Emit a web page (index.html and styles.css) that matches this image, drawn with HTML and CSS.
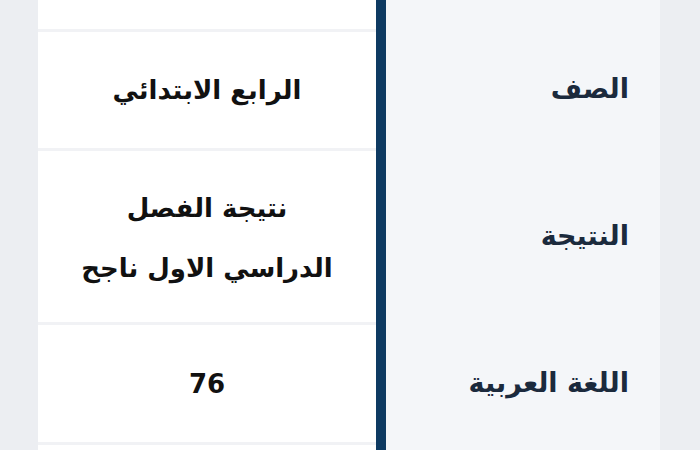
FILE: index.html
```html
<!DOCTYPE html>
<html lang="ar" dir="rtl">
<head>
<meta charset="utf-8">
<title>النتيجة</title>
<link rel="stylesheet" href="styles.css">
</head>
<body>
<main class="table">
  <div class="label first"></div>
  <div class="bar"></div>
  <div class="value first"></div>

  <div class="label"><span>الصف</span></div>
  <div class="value r2"><span>الرابع الابتدائي</span></div>

  <div class="label"><span>النتيجة</span></div>
  <div class="value r3"><span class="multi">نتيجة الفصل<br>الدراسي الاول ناجح</span></div>

  <div class="label"><span>اللغة العربية</span></div>
  <div class="value r4"><span>76</span></div>

  <div class="label"></div>
  <div class="value r5"></div>
</main>
</body>
</html>
```

FILE: styles.css
```css
html, body {
  margin: 0;
  padding: 0;
}
body {
  background: #eceef2;
  font-family: "DejaVu Sans", sans-serif;
  width: 700px;
  height: 450px;
  overflow: hidden;
}
.table {
  display: grid;
  grid-template-columns: 274px 10px 338px;
  grid-template-rows: 29px 119px 174px 120px 8px;
  margin-right: 40px;
  width: 622px;
}
.label {
  grid-column: 1;
  background: #f4f6f9;
  display: flex;
  align-items: center;
  padding-right: 31px;
  color: #1b2a3d;
  font-weight: bold;
  font-size: 27px;
}
.bar {
  grid-column: 2;
  grid-row: 1 / span 5;
  background: #0e3a62;
}
.value {
  grid-column: 3;
  background: #ffffff;
  display: flex;
  align-items: center;
  justify-content: center;
  color: #111111;
  font-weight: bold;
  font-size: 26px;
  text-align: center;
}
.value.first {
  grid-row: 1;
}
.value.r2, .value.r3, .value.r4, .value.r5 {
  border-top: 3px solid #f1f2f5;
}
.multi {
  line-height: 60px;
  padding-top: 2px;
}
```
